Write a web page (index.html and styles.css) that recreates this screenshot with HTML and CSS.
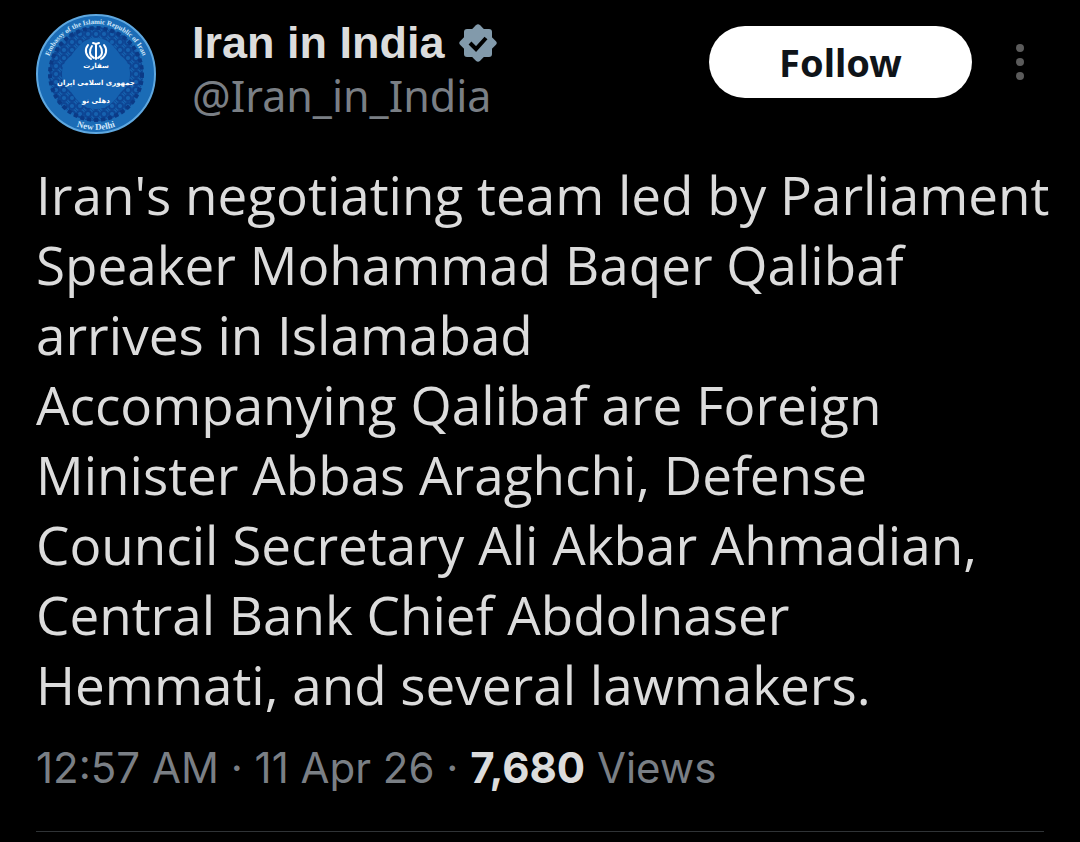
FILE: index.html
```
<!DOCTYPE html>
<html lang="en">
<head>
    <meta charset="UTF-8">
    <meta name="viewport" content="width=device-width, initial-scale=1.0">
    <title>Iran in India</title>
    <link rel="stylesheet" href="styles.css">
</head>
<body>
    <article class="post">
        <header class="post-header">
            <svg class="avatar" viewBox="0 0 120 120" role="img" aria-label="Iran in India">
                <defs>
                    <pattern id="tiles" width="8" height="8" patternUnits="userSpaceOnUse">
                        <circle cx="4" cy="4" r="3" fill="none" stroke="#0d4594" stroke-width="2"/>
                        <circle cx="0" cy="0" r="1" fill="#0d4594"/>
                        <circle cx="8" cy="8" r="1" fill="#0d4594"/>
                    </pattern>
                    <path id="topArc" d="M10 60a50 50 0 0 1 100 0"/>
                    <path id="bottomArc" d="M4 60a56 56 0 0 0 112 0"/>
                </defs>
                <circle cx="60" cy="60" r="59" fill="#1b6cb6" stroke="#5fa8e0" stroke-width="2"/>
                <circle cx="60" cy="60" r="47" fill="#1562b0"/>
                <circle cx="60" cy="60" r="47" fill="url(#tiles)"/>
                <circle cx="60" cy="60" r="46" fill="none" stroke="#0b3a86" stroke-width="4" stroke-dasharray="4 3"/>
                <path d="M60 24c12 0 18 8 25 18 6 4 9 10 9 18s-3 13-9 18c-7 10-13 17-25 17s-18-7-25-17c-6-5-9-10-9-18s3-14 9-18c7-10 13-18 25-18z" fill="#1562b0"/>
                <g fill="none" stroke="#fff" stroke-width="2" stroke-linecap="round">
                    <path d="M60 31v14M57 29l3 1 3-1"/>
                    <path d="M56 32c-3 4-3 10 2 12M64 32c3 4 3 10-2 12"/>
                    <path d="M52 31c-4 5-2 11 3 14M68 31c4 5 2 11-3 14"/>
                </g>
                <g class="avatar-fa">
                    <text x="60" y="54" font-size="7">سفارت</text>
                    <text x="60" y="71" font-size="7">جمهوری اسلامی ایران</text>
                    <text x="60" y="89" font-size="7">دهلی نو</text>
                </g>
                <g class="avatar-en">
                    <text font-size="7"><textPath href="#topArc" startOffset="50%">Embassy of the Islamic Republic of Iran</textPath></text>
                    <text font-size="9"><textPath href="#bottomArc" startOffset="50%">New Delhi</textPath></text>
                </g>
            </svg>

            <div class="names">
                <div class="name-row">
                    <h1 class="name">Iran in India</h1>
                    <svg class="badge" viewBox="0 0 38 38" role="img" aria-label="Verified">
                        <g fill="#829aab">
                            <rect x="5" y="5" width="28" height="28" rx="3"/>
                            <rect x="5" y="5" width="28" height="28" rx="3" transform="rotate(45 19 19)"/>
                        </g>
                        <path d="M11 19l6 6 10-11" fill="none" stroke="#000" stroke-width="4"/>
                    </svg>
                </div>
                <a class="handle" href="#">@Iran_in_India</a>
            </div>

            <button class="follow" type="button">Follow</button>
            <button class="more" type="button" aria-label="More">
                <svg viewBox="0 0 8 36" width="8" height="36" fill="#5b5b5b">
                    <circle cx="4" cy="4" r="4"/>
                    <circle cx="4" cy="18" r="4"/>
                    <circle cx="4" cy="32" r="4"/>
                </svg>
            </button>
        </header>

        <p class="text">
            Iran's negotiating team led by Parliament<br>
            Speaker Mohammad Baqer Qalibaf<br>
            arrives in Islamabad<br>
            Accompanying Qalibaf are Foreign<br>
            Minister Abbas Araghchi, Defense<br>
            Council Secretary Ali Akbar Ahmadian,<br>
            Central Bank Chief Abdolnaser<br>
            Hemmati, and several lawmakers.
        </p>

        <p class="meta">12:57 AM · 11 Apr 26 · <strong>7,680</strong> Views</p>
    </article>
</body>
</html>
```
FILE: styles.css
```
* {
    box-sizing: border-box;
}
body {
    margin: 0;
    background: #000;
    color: #dcdcdc;
    font-family: "Open Sans", "Noto Sans", sans-serif;
}
.post {
    margin: 0 36px;
    padding: 14px 0 31px;
    border-bottom: 1px solid #2f3336;
}
.post-header {
    display: flex;
    align-items: flex-start;
}
.avatar {
    width: 120px;
    height: 120px;
    flex: none;
}
.avatar-fa {
    fill: #fff;
    font-family: "DejaVu Sans", sans-serif;
    font-weight: 700;
    text-anchor: middle;
}
.avatar-en {
    fill: #cfe6fa;
    font-family: "Liberation Serif", serif;
    font-weight: 700;
    text-anchor: middle;
}
.names {
    flex: 1;
    margin-left: 36px;
}
.name-row {
    display: flex;
    align-items: center;
    gap: 14px;
    height: 58px;
}
.name {
    margin: 0;
    font-family: "Liberation Sans", Arial, sans-serif;
    font-size: 45px;
    font-weight: 700;
    line-height: 58px;
}
.badge {
    width: 38px;
    height: 38px;
}
.handle {
    display: block;
    color: #7a7f85;
    font-family: "Noto Sans", sans-serif;
    font-size: 43px;
    line-height: 48px;
    text-decoration: none;
}
.follow {
    width: 263px;
    height: 72px;
    margin-top: 12px;
    border: none;
    border-radius: 36px;
    background: #fff;
    color: #0f1419;
    font-family: "Noto Sans", sans-serif;
    font-size: 38px;
    font-weight: 700;
    cursor: pointer;
}
.more {
    display: flex;
    align-items: center;
    justify-content: center;
    width: 48px;
    height: 72px;
    margin: 12px 0 0 24px;
    padding: 0;
    border: none;
    background: none;
    cursor: pointer;
}
.text {
    margin: 26px 0 0;
    font-size: 53px;
    line-height: 70px;
    white-space: nowrap;
}
.meta {
    margin: 16px 0 0;
    color: #7a7f85;
    font-family: Inter, sans-serif;
    font-size: 42px;
    line-height: 64px;
}
.meta strong {
    color: #dcdcdc;
    font-weight: 700;
}
```
